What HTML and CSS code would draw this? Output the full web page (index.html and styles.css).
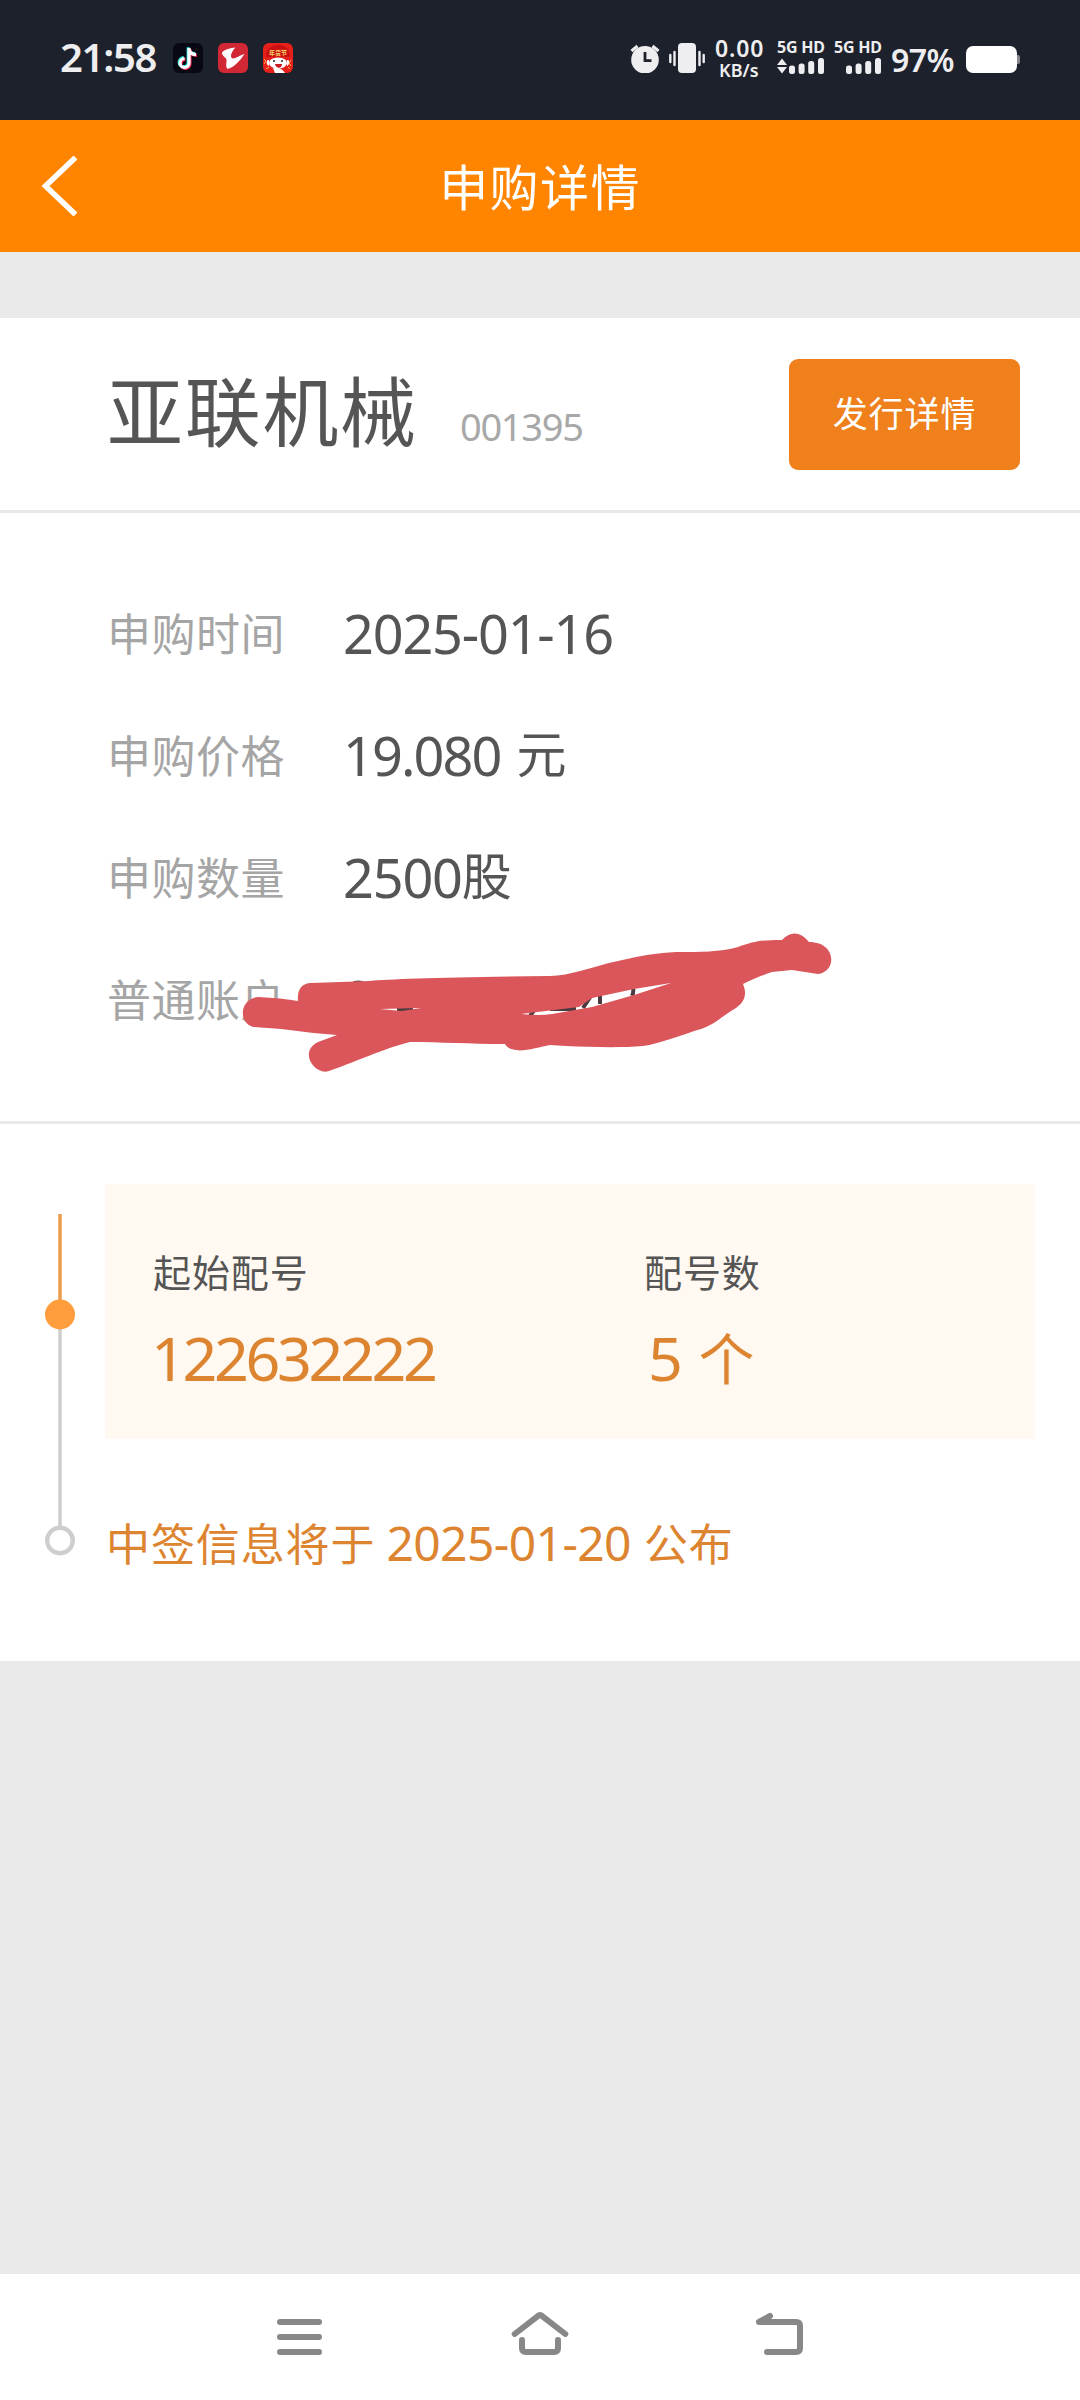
FILE: index.html
```html
<!DOCTYPE html>
<html lang="zh-CN">
<head>
<meta charset="utf-8">
<title>申购详情</title>
<link rel="stylesheet" href="styles.css">
</head>
<body>
<div class="status">
  <span class="clock">21:58</span>
  <div class="apps">
    <svg width="30" height="30" viewBox="0 0 30 30"><rect width="30" height="30" rx="6" fill="#080812"/><g fill="none" stroke-width="3.2"><path d="M16 5v15a4.500 4.500 0 1 1-4.500-4.500M16 6c.5 4 3 5.500 7 5.500" stroke="#25e3dc" transform="translate(-.8 -.8)"/><path d="M16 5v15a4.500 4.500 0 1 1-4.500-4.500M16 6c.5 4 3 5.500 7 5.500" stroke="#f2335a" transform="translate(.9 .9)"/><path d="M16 5v15a4.500 4.500 0 1 1-4.500-4.500M16 6c.5 4 3 5.500 7 5.500" stroke="#fff"/></g></svg>
    <svg width="30" height="30" viewBox="0 0 30 30"><rect width="30" height="30" rx="6" fill="#d22734"/><path d="M17.500 4.500C13 5 6 6.500 4 9.500c-.5 3 3.500 4.500 4.500 7C9 19.500 7 23 9.500 26c5.500-1 12.500-8 17-15-4.500 1-8 4.500-12 4.500-2.500-1-2-6 3-11z" fill="#fff"/></svg>
    <svg width="30" height="30" viewBox="0 0 30 30"><rect width="30" height="30" rx="6" fill="#e5201b"/><path d="M3 14c0-8 5-12 12-12s12 4 12 12z" fill="#c90f12"/><text class="badge-text" x="6" y="12">年货节</text><ellipse cx="15" cy="20" rx="9" ry="5.500" fill="#fff"/><path d="M6 17c-3-1-3 5 0 6M24 17c3-1 3 5 0 6M10 25c2-1 8-1 12 5H12z" fill="#fff"/><circle cx="11" cy="18" r="1" fill="#222"/><circle cx="19" cy="18" r="1" fill="#222"/><path d="M12 21h7c0 5-6 5-7 0z" fill="#c81822"/><path d="M1 16l2 2-2 3M28 17l-2 3 2 3M3 26l3-2M27 26l-2-2" stroke="#f7b04c" fill="none"/></svg>
  </div>
  <svg class="alarm" width="30" height="30" viewBox="0 0 30 30"><circle cx="15" cy="16.700" r="13.800" fill="#eeeef0"/><path d="M1.500 8l6-5M28.500 8l-6-5" stroke="#eeeef0" stroke-width="3"/><path d="M15 9v8.700h6.500" fill="none" stroke="#1d212c" stroke-width="2.800"/></svg>
  <svg class="vibrate" width="36" height="30" viewBox="0 0 36 30"><rect x="9" width="18" height="30" rx="4" fill="#eeeef0"/><path d="M1.300 12v7M5.500 9v13M30.500 9v13M34.700 12v7" stroke="#eeeef0" stroke-width="2.400" stroke-linecap="round"/></svg>
  <div class="rate"><span class="rate-num">0.00</span><span class="rate-unit">KB/s</span></div>
  <div class="sim">
    <span>5G HD</span>
    <svg width="48" height="17" viewBox="0 0 48 17"><path d="M0 8l5-6.500L10 8zM0 10l5 6.500 5-6.500z"/><rect x="12" y="8.500" width="6" height="8.500" rx="2.500"/><rect x="21.600" y="6.500" width="6" height="10.500" rx="2.500"/><rect x="31.200" y="4" width="6" height="13" rx="2.500"/><rect x="41" y="1" width="6" height="16" rx="2.500"/></svg>
  </div>
  <div class="sim">
    <span>5G HD</span>
    <svg width="48" height="17" viewBox="0 0 48 17"><rect x="12" y="8.500" width="6" height="8.500" rx="2.500"/><rect x="21.600" y="6.500" width="6" height="10.500" rx="2.500"/><rect x="31.200" y="4" width="6" height="13" rx="2.500"/><rect x="41" y="1" width="6" height="16" rx="2.500"/></svg>
  </div>
  <span class="percent">97%</span>
  <svg class="battery" width="54" height="27" viewBox="0 0 54 27"><rect x="49" y="9" width="5" height="9" rx="2" fill="#85878d"/><rect width="51" height="27" rx="7" fill="#fff"/></svg>
</div>

<header class="bar">
  <svg class="back" width="40" height="60" viewBox="0 0 40 60"><path d="M35.500 1.500L5.500 30l30 28.500" fill="none" stroke="#fff" stroke-width="5.500"/></svg>
  <h1>申购详情</h1>
</header>

<main class="sheet">
  <section class="stock">
    <h2>亚联机械</h2>
    <span class="code">001395</span>
    <button class="detail">发行详情</button>
  </section>

  <section class="info">
    <div class="row"><span class="label">申购时间</span><span class="value">2025-01-16</span></div>
    <div class="row"><span class="label">申购价格</span><span class="value"><span class="price">19.080</span><span class="unit">元</span></span></div>
    <div class="row"><span class="label">申购数量</span><span class="value">2500<span class="unit">股</span></span></div>
    <div class="row"><span class="label">普通账户</span><span class="value">0</span></div>
    <svg class="scribble" width="640" height="160" viewBox="220 920 640 160">
      <path d="M397 1009h16M530 1016l5-7M550 1009h26M583 1008l8-12M600 1004v-12M632 996q2-4 1-10" fill="none" stroke="#4b3b40" stroke-width="4"/>
      <path fill="#da565b" d="M311 983L370 981Q400 978 550 976C570 976 590 967 618 961Q650 953 676 952C700 952 720 952 738 947C755 941 762 940 782 940C790 931 800 931 809 942C837 942 837 972 818 974L792 970L772 972C760 976 752 980 743 984C748 996 743 1003 736 1008C723 1015 716 1024 701 1029C681 1035 659 1044 643 1046C620 1048 590 1047 566 1046L550 1045C535 1048 512 1056 505 1044C470 1044 440 1042 410 1042C385 1048 350 1064 329 1071C315 1076 298 1052 318 1042L337 1035Q310 1033 281 1029L254 1027C238 1024 239 999 258 997Q282 998 298 1001C297 991 301 983 311 983ZM380 1009L402 1011 421 1008ZM521 1014Q540 1016 552 1014L592 1007 634 995 671 983 634 989 592 998 579 1007Z"/>
    </svg>
  </section>

  <section class="progress">
    <svg class="track" width="30" height="345" viewBox="0 0 30 345"><path d="M15 0v100" stroke="#eb9c4e" stroke-width="3.500"/><path d="M15 100v213" stroke="#cecece" stroke-width="3.500"/><circle cx="15" cy="100.500" r="15" fill="#ff9d3c"/><circle cx="15" cy="326.500" r="12.800" fill="#fff" stroke="#cecece" stroke-width="4.400"/></svg>
    <div class="steps">
      <div class="card">
        <div class="cell"><span class="name">起始配号</span><span class="number">122632222</span></div>
        <div class="cell"><span class="name">配号数</span><span class="number count">5<span class="piece">个</span></span></div>
      </div>
      <p class="notice">中签信息将于<span class="date">2025-01-20</span>公布</p>
    </div>
  </section>
</main>

<nav class="keys">
  <svg width="52" height="50" viewBox="0 0 52 50"><path d="M7 13h39M7 28h39M7 43h39"/></svg>
  <svg width="60" height="50" viewBox="0 0 60 50"><path d="M4.700 25L27.500 7.300Q30 5 32.500 7.300L55.300 25M12 31v8q0 4 4 4h28q4 0 4-4v-8"/></svg>
  <svg width="52" height="50" viewBox="0 0 52 50"><path d="M16 7L5 13h37q4 0 4 4v22q0 4-4 4H13"/></svg>
</nav>
</body>
</html>
```
FILE: styles.css
```css
* { box-sizing: border-box; }
body {
  margin: 0;
  width: 1080px;
  height: 2400px;
  display: flex;
  flex-direction: column;
  background: #eaeaea;
  color: #555;
  font-family: "Noto Sans", "Noto Sans CJK SC", sans-serif;
  white-space: nowrap;
}
svg { display: block; flex: none; }
h1, h2, p { margin: 0; font-weight: 400; }

.status {
  height: 120px;
  flex: none;
  display: flex;
  align-items: flex-start;
  padding: 0 60px;
  background: #1d212c;
  color: #eeeef0;
}
.status > * { flex: none; }
.clock { width: 113px; margin-top: 37px; font-size: 40px; line-height: 40px; font-weight: 600; letter-spacing: -1.300px; }
.apps { display: flex; gap: 15px; margin-top: 43px; width: 457px; }
.badge-text { font-size: 6px; fill: #f8d36b; font-weight: 700; }
.alarm { margin-top: 43px; }
.vibrate { margin: 43px 0 0 9px; }
.rate { width: 72px; margin-top: 37px; padding-left: 10px; display: flex; flex-direction: column; font-weight: 600; }
.rate-num { font-size: 23px; line-height: 23px; letter-spacing: .9px; }
.rate-unit { font-size: 18px; line-height: 18px; margin-top: 1px; padding-left: 4px; }
.sim { width: 57px; margin-top: 39px; display: flex; flex-direction: column; gap: 2px; font-size: 16px; line-height: 16px; font-weight: 700; letter-spacing: -.2px; fill: #eeeef0; }
.percent { width: 75px; margin-top: 44px; font-size: 32px; line-height: 32px; font-weight: 600; letter-spacing: -.5px; }
.battery { margin-top: 46px; }

.bar {
  height: 132px;
  flex: none;
  display: grid;
  grid-template-columns: 40px 1fr 40px;
  align-items: center;
  padding: 0 40px;
  background: #ff8500;
  color: #fff;
}
.bar h1 { padding-top: 1px; text-align: center; font-size: 49px; line-height: 60px; letter-spacing: 1.400px; }

.sheet { height: 1343px; flex: none; margin-top: 66px; background: #fff; }
.stock { height: 195px; display: flex; padding: 0 60px 0 107px; border-bottom: 3px solid #e9e9e9; }
.stock h2 { width: 353px; margin-top: 46px; font-size: 76px; line-height: 96px; letter-spacing: 1.700px; }
.code { margin-top: 84px; font-size: 38px; line-height: 48px; letter-spacing: -1.300px; color: #a8a8a8; }
.detail {
  width: 231px;
  height: 111px;
  margin: 41px 0 0 auto;
  padding: 0 0 2px;
  border: 0;
  border-radius: 9px;
  background: #ef801b;
  color: #fff;
  font: 35px/60px "Noto Sans", "Noto Sans CJK SC", sans-serif;
  letter-spacing: .9px;
}

.info { position: relative; height: 611px; padding: 59px 107px 0; border-bottom: 3px solid #e9e9e9; }
.row { height: 122px; display: flex; align-items: center; line-height: 60px; }
.label { width: 236px; padding-top: 1px; font-size: 44px; letter-spacing: .5px; color: #a5a5a5; }
.value { display: flex; font-size: 54px; letter-spacing: -1.200px; }
.unit { margin-top: -1px; font-size: 50px; }
.price { margin-right: 16px; letter-spacing: -1.900px; }
.scribble { position: absolute; left: 220px; top: 407px; }

.progress { display: flex; padding: 60px 45px 0; }
.track { margin-top: 30px; }
.steps { padding-left: 30px; }
.card { width: 930px; height: 255px; padding: 60px 0 0 48px; display: grid; grid-template-columns: 491px 1fr; background: #fff9f2; }
.cell { display: flex; flex-direction: column; }
.name { font-size: 38px; line-height: 56px; letter-spacing: .9px; }
.number { margin-top: 18px; margin-left: -2px; font-size: 61px; line-height: 80px; letter-spacing: -3.400px; color: #dd8430; }
.count { padding-left: 6px; display: flex; }
.piece { margin-left: 19px; font-size: 56px; }
.notice { margin-top: 72px; padding-left: 1px; font-size: 44px; line-height: 64px; letter-spacing: .9px; color: #dd8430; }
.date { margin: 0 13px 0 11px; font-size: 48px; letter-spacing: -.6px; }

.keys { height: 126px; margin-top: auto; flex: none; display: flex; justify-content: space-between; padding: 35px 274px 0 273px; background: #fff; }
.keys path { fill: none; stroke: #888; stroke-width: 6; stroke-linecap: round; stroke-linejoin: round; }
```
